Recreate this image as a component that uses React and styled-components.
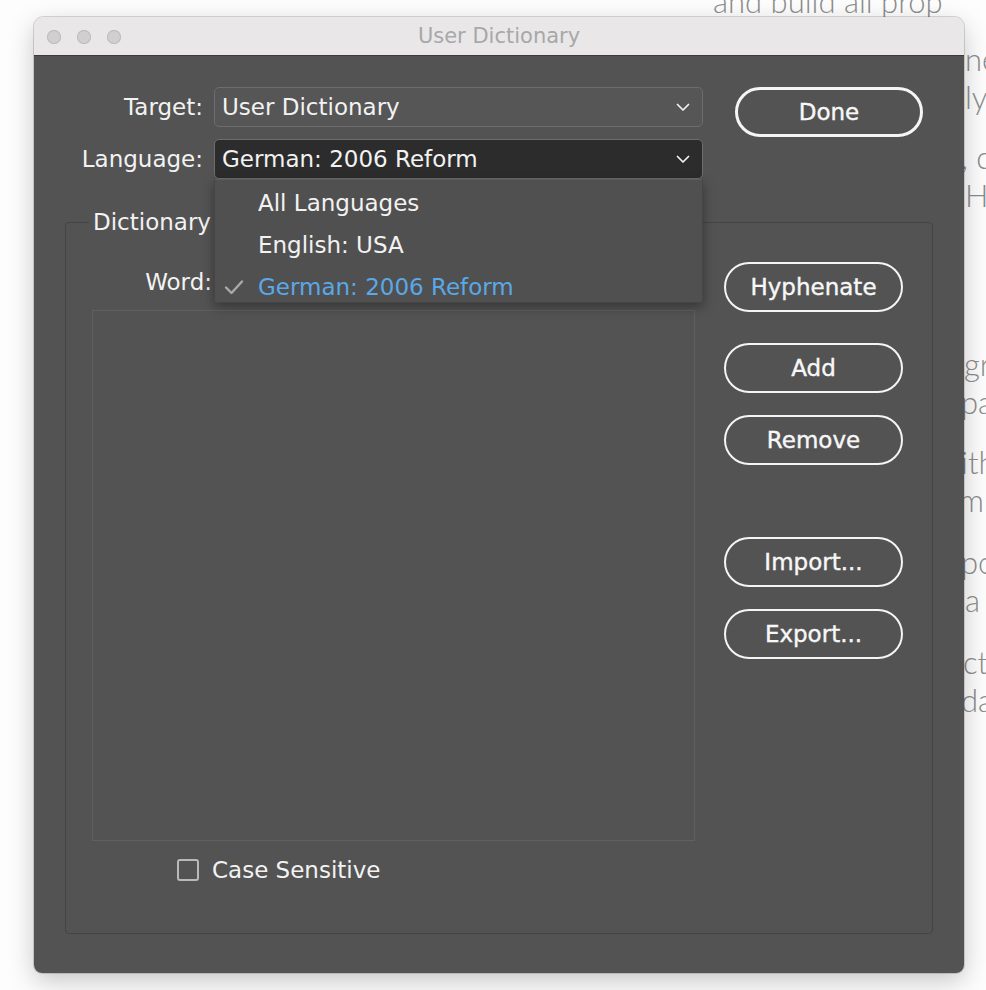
import React from 'react';
import styled, { createGlobalStyle } from 'styled-components';

const GlobalStyle = createGlobalStyle`
  html, body {
    margin: 0;
    padding: 0;
    background: #fdfdfd;
    overflow: hidden;
  }
  body {
    font-family: "DejaVu Sans", "Liberation Sans", sans-serif;
  }
`;

const Desktop = styled.div`
  position: relative;
  width: 986px;
  height: 990px;
  overflow: hidden;
`;

const PageText = styled.div`
  padding-left: 713px;
  margin-top: -18px;
  font-family: Lato, "Open Sans", sans-serif;
  font-weight: 300;
  font-size: 31px;
  line-height: 38px;
  color: #8c8c8c;
  white-space: nowrap;
`;

const Para = styled.div`
  margin-top: ${p => p.gap}px;
`;

const BgLine = styled.div`
  padding-left: ${p => p.indent || 0}px;
`;

const Win = styled.div`
  position: absolute;
  left: 34px;
  top: 17px;
  width: 930px;
  height: 956px;
  border-radius: 10px 10px 8px 8px;
  overflow: hidden;
  display: flex;
  flex-direction: column;
  box-shadow: 0 0 0 1px rgba(0, 0, 0, 0.14), 0 8px 26px rgba(0, 0, 0, 0.22);
`;

const TitleBar = styled.div`
  height: 38px;
  flex: none;
  display: grid;
  grid-template-columns: 1fr auto 1fr;
  align-items: center;
  background: #e9e7e8;
  border-bottom: 1px solid #3c3c3c;
`;

const Lights = styled.div`
  display: flex;
  gap: 16px;
  padding: 2px 0 0 13px;
`;

const Light = styled.span`
  width: 14px;
  height: 14px;
  border-radius: 50%;
  background: #d1d0d0;
  box-shadow: inset 0 0 0 1px #bdbcbc;
`;

const Title = styled.div`
  font-size: 21px;
  color: #a8a8a8;
`;

const Body = styled.div`
  flex: 1;
  background: #535353;
  padding-top: 31px;
  color: #f2f2f2;
  font-size: 23px;
`;

const FormGrid = styled.div`
  display: grid;
  grid-template-columns: 146px 489px 188px;
  grid-template-rows: 40px 40px;
  column-gap: 11px;
  row-gap: 12px;
  padding-left: 23px;
`;

const Label = styled.div`
  text-align: right;
  line-height: 40px;
  white-space: nowrap;
`;

const Select = styled.div`
  position: relative;
  display: flex;
  align-items: center;
  justify-content: space-between;
  box-sizing: border-box;
  height: 40px;
  padding: 0 12px 0 7px;
  border: 1px solid #6d6d6d;
  border-radius: 5px;
  background: ${p => (p.open ? '#2c2c2c' : '#565656')};
  white-space: nowrap;
`;

const Chevron = () => (
  <svg width="14" height="9" viewBox="0 0 14 9">
    <path d="M1.5 1.5 L7 7 L12.5 1.5" fill="none" stroke="#f2f2f2" strokeWidth="1.7" strokeLinecap="round" strokeLinejoin="round" />
  </svg>
);

const Menu = styled.div`
  position: absolute;
  z-index: 5;
  top: calc(100% + 1px);
  left: -1px;
  right: -1px;
  height: 124px;
  box-sizing: border-box;
  padding-top: 2px;
  background: #505050;
  border: 1px solid #454545;
  border-top-color: #5c5c5c;
  border-radius: 2px;
  box-shadow: 0 4px 12px rgba(0, 0, 0, 0.35);
`;

const MenuItem = styled.div`
  position: relative;
  height: 42px;
  line-height: 42px;
  padding-left: 43px;
  color: ${p => (p.checked ? '#5aa8e6' : '#f2f2f2')};
  white-space: nowrap;
`;

const Check = styled.svg`
  position: absolute;
  left: 9px;
  top: 13px;
`;

const PillButton = styled.button`
  box-sizing: border-box;
  width: ${p => (p.wide ? 188 : 179)}px;
  height: 50px;
  border: ${p => (p.wide ? 3 : 2)}px solid #f5f5f5;
  border-radius: 25px;
  background: transparent;
  color: #f7f7f7;
  font-family: "DejaVu Sans", "Liberation Sans", sans-serif;
  font-size: 23px;
  -webkit-text-stroke: 0.4px #f7f7f7;
  padding: 0;
  margin-top: ${p => p.gap || 0}px;
`;

const DoneButton = styled(PillButton)`
  grid-column: 3;
  grid-row: 1;
  margin-left: 21px;
`;

const Group = styled.div`
  position: relative;
  box-sizing: border-box;
  margin: 43px 0 0 31px;
  width: 868px;
  height: 712px;
  border: 1px solid #444;
  border-radius: 4px;
  padding: 39px 29px 0 26px;
  display: grid;
  grid-template-columns: 603px 179px;
  column-gap: 29px;
  align-items: start;
`;

const GroupTitle = styled.div`
  position: absolute;
  top: -16px;
  left: 23px;
  padding: 0 4px;
  line-height: 30px;
  background: #535353;
`;

const LeftCol = styled.div`
  display: flex;
  flex-direction: column;
`;

const WordRow = styled.div`
  display: grid;
  grid-template-columns: 120px 1fr;
  column-gap: 10px;
  height: 40px;
  align-items: center;
`;

const WordInput = styled.div`
  height: 34px;
  border: 1px solid #6d6d6d;
  border-radius: 4px;
`;

const ListBox = styled.div`
  margin-top: 8px;
  height: 531px;
  box-sizing: border-box;
  border: 1px solid #606060;
`;

const CheckRow = styled.label`
  display: flex;
  align-items: center;
  gap: 13px;
  margin-top: 18px;
  padding-left: 85px;
  height: 22px;
`;

const CheckBox = styled.span`
  width: 22px;
  height: 22px;
  box-sizing: border-box;
  border: 2px solid #b9b9b9;
  border-radius: 3px;
`;

const RightCol = styled.div`
  display: flex;
  flex-direction: column;
`;

const bgParas = [
  { gap: 0, lines: [['and build all prop', 0]] },
  { gap: 20, lines: [['ne', 252], ['ly', 252]] },
  { gap: 22, lines: [[', c', 248], ['H', 252]] },
  { gap: 131, lines: [['gr', 251], ['pa', 248]] },
  { gap: 22, lines: [['ith', 248], ['mp', 246]] },
  { gap: 24, lines: [['po', 248], [' a', 252]] },
  { gap: 24, lines: [['ct', 250], ['da', 248]] },
];

export default function App() {
  return (
    <Desktop>
      <GlobalStyle />
      <PageText>
        {bgParas.map((p, i) => (
          <Para key={i} gap={p.gap}>
            {p.lines.map(([t, ind], j) => (
              <BgLine key={j} indent={ind}>{t}</BgLine>
            ))}
          </Para>
        ))}
      </PageText>

      <Win>
        <TitleBar>
          <Lights>
            <Light />
            <Light />
            <Light />
          </Lights>
          <Title>User Dictionary</Title>
          <div />
        </TitleBar>
        <Body>
          <FormGrid>
            <Label>Target:</Label>
            <Select>
              <span>User Dictionary</span>
              <Chevron />
            </Select>
            <DoneButton wide>Done</DoneButton>
            <Label>Language:</Label>
            <Select open>
              <span>German: 2006 Reform</span>
              <Chevron />
              <Menu>
                <MenuItem>All Languages</MenuItem>
                <MenuItem>English: USA</MenuItem>
                <MenuItem checked>
                  <Check width="20" height="16" viewBox="0 0 20 16">
                    <path d="M2 8.5 L7.5 14 L18 2.5" fill="none" stroke="#a9a9a9" strokeWidth="2.4" strokeLinecap="round" strokeLinejoin="round" />
                  </Check>
                  German: 2006 Reform
                </MenuItem>
              </Menu>
            </Select>
          </FormGrid>

          <Group>
            <GroupTitle>Dictionary</GroupTitle>
            <LeftCol>
              <WordRow>
                <Label>Word:</Label>
                <WordInput />
              </WordRow>
              <ListBox />
              <CheckRow>
                <CheckBox />
                <span>Case Sensitive</span>
              </CheckRow>
            </LeftCol>
            <RightCol>
              <PillButton>Hyphenate</PillButton>
              <PillButton gap={31}>Add</PillButton>
              <PillButton gap={22}>Remove</PillButton>
              <PillButton gap={72}>Import...</PillButton>
              <PillButton gap={22}>Export...</PillButton>
            </RightCol>
          </Group>
        </Body>
      </Win>
    </Desktop>
  );
}
